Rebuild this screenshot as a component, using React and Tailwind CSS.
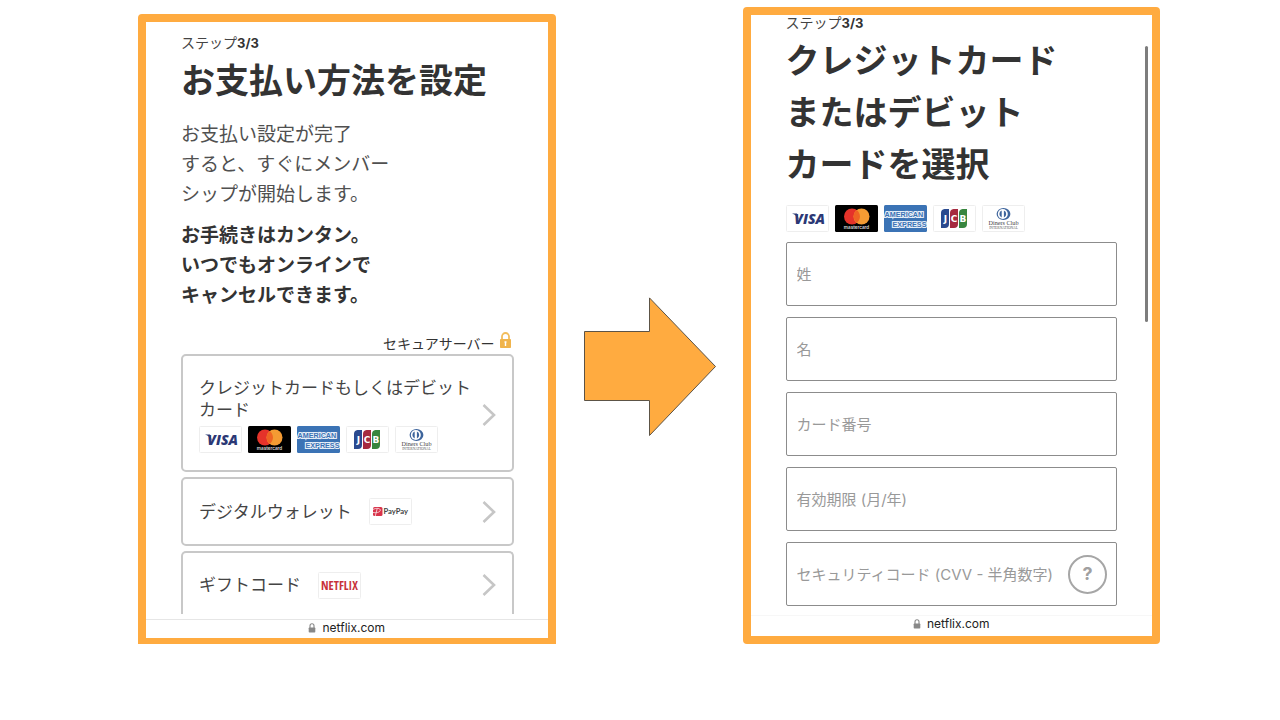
import { useState } from "react";

const cardFields = [
  { id: "lastName", label: "姓" },
  { id: "firstName", label: "名" },
  { id: "cardNumber", label: "カード番号" },
  { id: "expiry", label: "有効期限 (月/年)" },
  { id: "cvv", label: "セキュリティコード (CVV - 半角数字)" },
];

function LogoTile({ label, children }) {
  return (
    <svg
      viewBox="0 0 43 27"
      role="img"
      aria-label={label}
      className="w-[43px] h-[27px] shrink-0"
    >
      <rect x="0.5" y="0.5" width="42" height="26" rx="1" fill="#fff" stroke="#eee" />
      {children}
    </svg>
  );
}

function CardLogos() {
  return (
    <div className="flex gap-[6px]">
      {/* Visa */}
      <LogoTile label="VISA">
        <path d="M6 8.5H11L13 15C11.5 12 9.5 9.7 6 8.5Z" fill="#2b3875" />
        <text
          x="8.3"
          y="18.6"
          fontSize="14"
          fontWeight="800"
          fontStyle="italic"
          fontFamily="Open Sans, sans-serif"
          fill="#2b3875"
        >
          VISA
        </text>
      </LogoTile>

      {/* Mastercard */}
      <LogoTile label="mastercard">
        <rect width="43" height="27" rx="1.5" fill="#000" />
        <circle cx="17" cy="11.5" r="8" fill="#e5332a" />
        <circle cx="26.5" cy="11.5" r="8" fill="#f49b33" />
        <path d="M21.75 5.1a8 8 0 0 1 0 12.8a8 8 0 0 1 0-12.8Z" fill="#ee6423" />
        <text
          x="21.5"
          y="23.6"
          fontSize="4.6"
          fontWeight="600"
          textAnchor="middle"
          fontFamily="Inter, sans-serif"
          fill="#ddd"
        >
          mastercard
        </text>
      </LogoTile>

      {/* American Express */}
      <LogoTile label="AMERICAN EXPRESS">
        <rect width="43" height="27" rx="1.5" fill="#3b73b5" />
        <g
          fontSize="7.2"
          fontWeight="700"
          fontFamily="Liberation Sans, sans-serif"
          fill="#3b73b5"
          stroke="#e6eef7"
          strokeWidth="2.2"
          paintOrder="stroke"
        >
          <text x="0.5" y="12">
            AMERICAN
          </text>
          <text x="8.5" y="21.6">
            EXPRESS
          </text>
        </g>
      </LogoTile>

      {/* JCB */}
      <LogoTile label="JCB">
        <path d="M11.5 4H16V19a4 4 0 0 1-4 4H8V8a4 4 0 0 1 3.5-4Z" fill="#2a4a8f" />
        <path d="M20.5 4H25V19a4 4 0 0 1-4 4H17V8a4 4 0 0 1 3.5-4Z" fill="#a62b40" />
        <path d="M29.5 4H34V19a4 4 0 0 1-4 4H26V8a4 4 0 0 1 3.5-4Z" fill="#38863f" />
        <g
          fontSize="9"
          fontWeight="700"
          textAnchor="middle"
          fontFamily="DejaVu Sans, sans-serif"
          fill="#fff"
        >
          <text x="12.5" y="16.8">
            J
          </text>
          <text x="21" y="16.8">
            C
          </text>
          <text x="30" y="16.8">
            B
          </text>
        </g>
      </LogoTile>

      {/* Diners Club */}
      <LogoTile label="Diners Club INTERNATIONAL">
        <ellipse cx="21.5" cy="9" rx="6.9" ry="6" fill="#3d649c" />
        <circle cx="20.8" cy="9" r="5" fill="#fff" />
        <path d="M19.7 5.5v7a3.8 3.8 0 0 1 0-7ZM21.9 5.5v7a3.8 3.8 0 0 0 0-7Z" fill="#3d649c" />
        <text
          x="21.5"
          y="20"
          fontSize="6.2"
          textAnchor="middle"
          fontFamily="Liberation Serif, serif"
          fill="#444"
        >
          Diners Club
        </text>
        <text
          x="21.5"
          y="23.6"
          fontSize="3.6"
          textAnchor="middle"
          fontFamily="Liberation Serif, serif"
          fill="#555"
        >
          INTERNATIONAL
        </text>
      </LogoTile>
    </div>
  );
}

function PayPayLogo() {
  return (
    <LogoTile label="PayPay">
      <rect x="4" y="9" width="9.5" height="9" rx="1.5" fill="#d8334a" />
      <path
        d="M4 11.5C7 9.8 11.5 10 11.3 12.3C11 14.5 7 15 4 14.5M8.2 10.5L6.3 18"
        fill="none"
        stroke="#fff"
        strokeWidth="0.7"
      />
      <text
        x="14.5"
        y="16.2"
        fontSize="7.6"
        fontWeight="700"
        fontFamily="Lato, sans-serif"
        fill="#444"
      >
        PayPay
      </text>
    </LogoTile>
  );
}

function NetflixLogo() {
  return (
    <LogoTile label="NETFLIX">
      <text
        x="21.5"
        y="17.8"
        fontSize="12"
        fontWeight="700"
        textAnchor="middle"
        fontFamily="Open Sans Condensed, Liberation Sans Narrow, sans-serif"
        fill="#c8323a"
      >
        NETFLIX
      </text>
    </LogoTile>
  );
}

function Chevron() {
  return (
    <svg viewBox="0 0 14 22" className="w-[14px] h-[22px] shrink-0" aria-hidden="true">
      <path d="M1.5 1L12 11L1.5 21" fill="none" stroke="#c6c6c6" strokeWidth="2.6" />
    </svg>
  );
}

function StepLabel() {
  return (
    <p className="text-sm leading-4 text-[#444]">
      ステップ<b className="text-[13px] text-[#333]">3/3</b>
    </p>
  );
}

function AddressBar() {
  return (
    <div className="flex items-center justify-center gap-[6px] h-4 text-xs text-[#222]">
      <svg viewBox="0 0 8 10" className="w-[8px] h-[10px]" aria-hidden="true">
        <path d="M2 5V2.7a2 2 0 0 1 4 0V5" fill="none" stroke="#888" strokeWidth="1.1" />
        <rect x="0.7" y="4.4" width="6.6" height="5.2" rx="0.8" fill="#888" />
      </svg>
      <span>netflix.com</span>
    </div>
  );
}

function PaymentMethods() {
  return (
    <section className="flex-1 mt-[7px] border-8 border-b-[6px] border-[#ffab40] rounded-t bg-white">
      <div className="pl-[35px] pr-[34px] pt-[13px]">
        <StepLabel />
        <h1 className="mt-1 text-[34px] leading-[52px] font-bold whitespace-nowrap">
          お支払い方法を設定
        </h1>
        <p className="mt-[13px] text-[19px] leading-[30px] text-[#505050]">
          お支払い設定が完了
          <br />
          すると、すぐにメンバー
          <br />
          シップが開始します。
        </p>
        <p className="mt-[11px] text-[19px] leading-[30px] font-bold">
          お手続きはカンタン。
          <br />
          いつでもオンラインで
          <br />
          キャンセルできます。
        </p>

        <div className="flex justify-end gap-1 mt-[21px] pr-[2px] h-[22px] text-sm leading-6">
          <span>セキュアサーバー</span>
          <svg viewBox="0 0 13 17" className="w-[13px] h-[17px]" aria-hidden="true">
            <path d="M3 8V4.5a3.5 3.5 0 0 1 7 0V8" fill="none" stroke="#f2bd5c" strokeWidth="1.8" />
            <rect x="1" y="7" width="11" height="9" rx="0.8" fill="#f0b44c" />
            <path d="M5.5 10h2M6.5 9.5v4.5" stroke="#fff" strokeWidth="1.4" />
          </svg>
        </div>

        {/* Payment options */}
        <div className="flex flex-col gap-[5px] text-[17px] leading-[22px] text-[#444]">
          <button className="flex items-center justify-between px-4 pt-[21px] pb-[17px] border-2 border-[#c8c8c8] rounded-[5px] text-left">
            <span>
              <span className="block whitespace-nowrap">
                クレジットカードもしくはデビット
                <br />
                カード
              </span>
              <span className="block mt-[5px]">
                <CardLogos />
              </span>
            </span>
            <Chevron />
          </button>
          <button className="flex items-center h-[69px] px-4 border-2 border-[#c8c8c8] rounded-[5px]">
            <span className="mr-[17px]">デジタルウォレット</span>
            <PayPayLogo />
            <span className="ml-auto">
              <Chevron />
            </span>
          </button>
          <button className="flex items-center h-[63px] pt-[3px] px-4 border-2 border-b-0 border-[#c8c8c8] rounded-t-[5px]">
            <span className="mr-[17px]">ギフトコード</span>
            <NetflixLogo />
            <span className="ml-auto">
              <Chevron />
            </span>
          </button>
        </div>
      </div>
      <div className="mt-[5px] pb-[2px] border-t border-[#e6e6e6]">
        <AddressBar />
      </div>
    </section>
  );
}

function CardForm() {
  const [values, setValues] = useState({});

  return (
    <section className="relative flex-1 border-8 border-[#ffab40] rounded bg-white">
      {/* Scroll indicator */}
      <div className="absolute top-[31px] right-1 w-[3px] h-[276px] rounded-full bg-[#7d7d7d]" />

      <div className="px-[35px]">
        <StepLabel />
        <h2 className="mt-1 text-[34px] leading-[52px] font-bold whitespace-nowrap">
          クレジットカード
          <br />
          またはデビット
          <br />
          カードを選択
        </h2>
        <div className="mt-[14px]">
          <CardLogos />
        </div>

        <form className="flex flex-col gap-[11px] mt-[10px]">
          {cardFields.map((field) => (
            <div
              key={field.id}
              className="flex items-center h-16 border border-[#8c8c8c] rounded-xs"
            >
              <input
                id={field.id}
                type="text"
                aria-label={field.label}
                placeholder={field.label}
                value={values[field.id] || ""}
                onChange={(e) => setValues({ ...values, [field.id]: e.target.value })}
                className="flex-1 min-w-0 h-full pl-[10px] text-[15px] outline-none placeholder:text-[#999]"
              />
              {field.id === "cvv" && (
                <button
                  type="button"
                  aria-label="?"
                  className="size-[39px] mr-[9px] shrink-0 border-2 border-[#a6a6a6] rounded-full text-lg leading-none font-bold text-[#a0a0a0]"
                >
                  ?
                </button>
              )}
            </div>
          ))}
        </form>
      </div>
      <div className="mt-[9px] pb-1 border-t border-[#f7f7f7]">
        <AddressBar />
      </div>
    </section>
  );
}

function App() {
  return (
    <main
      lang="ja"
      className="flex items-start min-h-screen pt-[7px] pl-[138px] pr-[120px] bg-white text-[#333] font-['Inter','Noto_Sans_CJK_JP',sans-serif]"
    >
      <PaymentMethods />
      <svg
        viewBox="0 0 133 140"
        className="w-[133px] h-[140px] mt-[290px] mx-[27px] shrink-0"
        aria-hidden="true"
      >
        <path
          d="M1.5 34.5H66.5V0.9L132.5 69.5L66.5 138.5V103.5H1.5Z"
          fill="#ffab40"
          stroke="#5c5346"
          strokeWidth="1"
        />
      </svg>
      <CardForm />
    </main>
  );
}

export default App;
